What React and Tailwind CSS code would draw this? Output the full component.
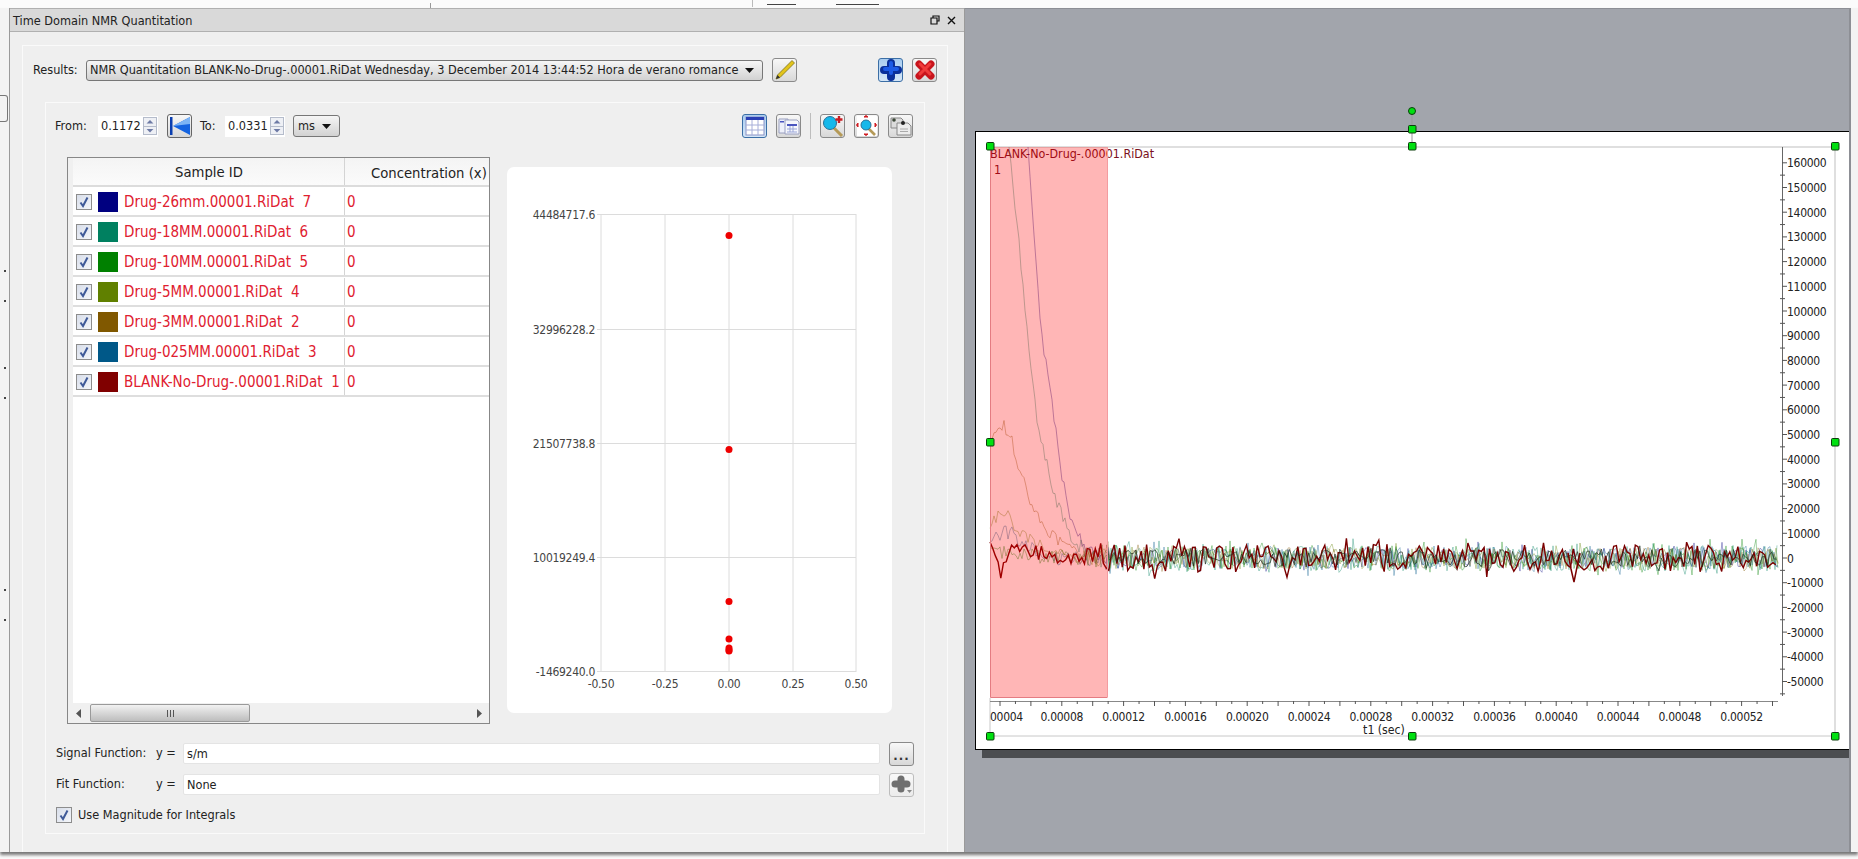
const samples = [
  { name: "Drug-26mm.00001.RiDat  7", color: "bg-[#000080]" },
  { name: "Drug-18MM.00001.RiDat  6", color: "bg-[#008060]" },
  { name: "Drug-10MM.00001.RiDat  5", color: "bg-[#008000]" },
  { name: "Drug-5MM.00001.RiDat  4", color: "bg-[#608000]" },
  { name: "Drug-3MM.00001.RiDat  2", color: "bg-[#805800]" },
  { name: "Drug-025MM.00001.RiDat  3", color: "bg-[#005888]" },
  { name: "BLANK-No-Drug-.00001.RiDat  1", color: "bg-[#800000]" },
];

function Check({ className = "" }) {
  return (
    <span className={`w-[16px] h-[16px] shrink-0 border border-[#8d8d8d] bg-gradient-to-br from-[#d8deea] to-[#f4f6fa] flex items-center justify-center ${className}`}>
      <svg width="12" height="12" viewBox="0 0 12 12">
        <path d="M2.5 6.5 L5 10 L9.5 1.5" fill="none" stroke="#3f5a98" strokeWidth="2" />
      </svg>
    </span>
  );
}

function IconButton({ active, children, className = "" }) {
  return (
    <button
      className={`w-[25px] h-[24px] shrink-0 rounded-[3px] border flex items-center justify-center ${
        active
          ? "border-[#3b6ea5] bg-gradient-to-b from-[#a9cdf0] to-[#d5e6f7]"
          : "border-[#8a8a8a] bg-gradient-to-b from-[#f8f8f8] to-[#d8d8d8]"
      } ${className}`}
    >
      {children}
    </button>
  );
}

function Spin({ value }) {
  return (
    <div className="w-[60px] h-[21px] bg-white flex items-center pl-[3px] pr-[1px] text-[12.6px] text-[#222]">
      <span className="flex-1">{value}</span>
      <div className="flex flex-col w-[14px] h-[18px] border border-[#b5bccb] bg-[#eef0f5]">
        <svg className="flex-1" viewBox="0 0 14 8"><path d="M3 6 L7 2 L11 6Z" fill="#6d7aa5" /></svg>
        <svg className="flex-1 border-t border-[#b5bccb]" viewBox="0 0 14 8"><path d="M3 2 L7 6 L11 2Z" fill="#6d7aa5" /></svg>
      </div>
    </div>
  );
}

function Arrow() {
  return (
    <svg width="9" height="5" viewBox="0 0 9 5" className="shrink-0">
      <path d="M0 0 H9 L4.5 5Z" fill="#111" />
    </svg>
  );
}

function FunctionRow({ label, value, className = "", children }) {
  return (
    <div className={`flex items-center h-[21px] ml-[10px] text-[12.6px] text-[#222] ${className}`}>
      <span className="w-[100px]">{label}</span>
      <span className="w-[27px]">y =</span>
      <div className="w-[697px] h-[21px] bg-white border border-[#e4e4e4] rounded-[2px] pl-[3px] leading-[19px]">{value}</div>
      <div className="ml-[9px]">{children}</div>
    </div>
  );
}

function ScatterChart() {
  const hLines = [
    [214.5, "44484717.6"],
    [329.5, "32996228.2"],
    [443.5, "21507738.8"],
    [557.5, "10019249.4"],
    [671.5, "-1469240.0"],
  ];
  const vLines = [
    [601, "-0.50"],
    [665, "-0.25"],
    [729, "0.00"],
    [793, "0.25"],
    [856, "0.50"],
  ];
  const points = [235.5, 449.5, 601.5, 639, 648, 650, 651];
  return (
    <svg width="385" height="546" viewBox="507 167 385 546" className="block">
      {hLines.map(([y, label]) => (
        <g key={label}>
          <line x1="597" x2="856" y1={y} y2={y} stroke="#dcdcdc" />
          <text x="595" y={y + 4} textAnchor="end" fontSize="12" letterSpacing="-0.3" fill="#444">{label}</text>
        </g>
      ))}
      {vLines.map(([x, label]) => (
        <g key={label}>
          <line x1={x} x2={x} y1="214" y2="672" stroke="#dcdcdc" />
          <text x={x} y="688" textAnchor="middle" fontSize="12" letterSpacing="-0.3" fill="#444">{label}</text>
        </g>
      ))}
      {points.map((y) => (
        <circle key={y} cx="729" cy={y} r="3.5" fill="#ee0000" />
      ))}
    </svg>
  );
}

function mulberry(seed) {
  return () => {
    seed |= 0;
    seed = (seed + 0x6d2b79f5) | 0;
    let t = Math.imul(seed ^ (seed >>> 15), 1 | seed);
    t = (t + Math.imul(t ^ (t >>> 7), 61 | t)) ^ t;
    return ((t ^ (t >>> 14)) >>> 0) / 4294967296;
  };
}

function baseline(points, x) {
  if (x <= points[0][0]) return points[0][1];
  for (let i = 1; i < points.length; i++) {
    if (x <= points[i][0]) {
      const [x0, y0] = points[i - 1];
      const [x1, y1] = points[i];
      return y0 + ((y1 - y0) * (x - x0)) / (x1 - x0);
    }
  }
  return 557;
}

function trace(seed, points, startX, amp, step = 2) {
  const rnd = mulberry(seed * 131);
  const out = [];
  for (let x = startX; x <= 1778; x += step) {
    const base = baseline(points, x);
    const env = x < 1085 ? 0.55 : x < 1105 ? 0.75 : 1;
    let n = (rnd() - 0.5) * 2 * amp * env;
    if (rnd() > 0.92) n *= 1.5;
    out.push(`${x.toFixed(1)},${Math.max(146, base + n).toFixed(1)}`);
  }
  return out.join(" ");
}

const traces = [
  { color: "#000080", seed: 7, pts: [[1028, 146], [1037, 277], [1041, 330], [1052, 400], [1062, 480], [1070, 513], [1077, 530], [1083, 542], [1100, 557]], start: 1028, amp: 11 },
  { color: "#008060", seed: 6, pts: [[1009, 146], [1021, 263], [1027, 330], [1038, 420], [1050, 480], [1060, 510], [1070, 535], [1085, 550], [1100, 557]], start: 1009, amp: 13 },
  { color: "#005888", seed: 3, pts: [[990, 542], [1005, 530], [1040, 552], [1060, 557]], start: 990, amp: 12 },
  { color: "#805800", seed: 2, pts: [[990, 438], [1003, 423], [1012, 440], [1018, 470], [1023, 480], [1045, 530], [1060, 540], [1075, 553], [1090, 557]], start: 990, amp: 11 },
  { color: "#608000", seed: 4, pts: [[990, 523], [1006, 508], [1014, 525], [1027, 537], [1050, 550], [1070, 557]], start: 990, amp: 11 },
  { color: "#008000", seed: 5, pts: [[990, 550], [1030, 552], [1070, 557]], start: 990, amp: 13 },
];
const blank = trace(
  1,
  [[990, 548], [996, 560], [1000, 575], [1001, 585], [1004, 565], [1008, 550], [1040, 552], [1070, 558]],
  990,
  14,
  2.7
);
const dark = trace(9, [[1107, 557]], 1107, 9, 2.4);

function Canvas() {
  const yTicks = [];
  for (let v = 160000; v >= -50000; v -= 10000) yTicks.push(v);
  const xLabels = ["00004", "0.00008", "0.00012", "0.00016", "0.00020", "0.00024", "0.00028", "0.00032", "0.00036", "0.00040", "0.00044", "0.00048", "0.00052"];
  const handles = [[990, 145], [1412, 145], [1835, 145], [990, 441], [1835, 441], [990, 735], [1412, 735], [1835, 735], [1412, 128]];
  const xTicks = [];
  for (let i = 0; i < 51; i++) xTicks.push(1000 + i * 15.45);
  const yOf = (v) => 557 - (v / 10000) * 24.7;
  return (
    <svg width="886" height="844" viewBox="965 8 886 844" className="absolute inset-0">
      <rect x="990" y="145" width="845" height="2" fill="#dfdfdf" />
      <rect x="1834" y="146" width="2" height="589" fill="#dfdfdf" />
      <line x1="990" x2="1835" y1="735" y2="735" stroke="#c8c8c8" />
      <line x1="990" x2="990" y1="697" y2="735" stroke="#c8c8c8" />
      <line x1="1412" x2="1412" y1="110" y2="146" stroke="#999" />

      <text x="990" y="157" fontSize="12.4" fill="#7a1020">BLANK-No-Drug-.00001.RiDat</text>
      <text x="994" y="173" fontSize="12.4" fill="#7a1020">1</text>

      {traces.map((t) => (
        <polyline key={t.seed} points={trace(t.seed, t.pts, t.start, t.amp)} fill="none" stroke={t.color} strokeWidth="0.8" opacity="0.45" />
      ))}
      <polyline points={blank} fill="none" stroke="#7a0000" strokeWidth="1.4" />
      <polyline points={dark} fill="none" stroke="#1a2a1a" strokeWidth="0.9" opacity="0.75" />
      <polyline points="1568,552 1571,568 1574,581 1577,566 1580,552" fill="none" stroke="#7a0000" strokeWidth="1.5" />

      <rect x="990.5" y="146" width="117" height="550" fill="#ff0000" fillOpacity="0.285" />
      <path d="M990.5 146 V696.5 H1107.5" fill="none" stroke="#e47c82" />
      <line x1="1107.5" x2="1107.5" y1="146" y2="696" stroke="#f39ca0" />

      <line x1="990" x2="1778" y1="700.5" y2="700.5" stroke="#888" />
      {xTicks.map((x, i) => (
        <line key={x} x1={x} x2={x} y1="700" y2={i % 2 ? 703 : 705} stroke="#555" />
      ))}
      {xLabels.map((label, i) =>
        i === 0 ? (
          <text key={label} x="990" y="720" fontSize="12" letterSpacing="-0.3" fill="#222">{label}</text>
        ) : (
          <text key={label} x={1000 + i * 61.8} y="720" textAnchor="middle" fontSize="12" letterSpacing="-0.3" fill="#222">{label}</text>
        )
      )}
      <text x="1384" y="733" textAnchor="middle" fontSize="12.2" fill="#222">t1 (sec)</text>

      <line x1="1782.5" x2="1782.5" y1="146" y2="695" stroke="#666" />
      {yTicks.map((v) => (
        <g key={v}>
          <line x1="1782" x2="1787" y1={yOf(v)} y2={yOf(v)} stroke="#555" />
          <line x1="1780" x2="1785" y1={yOf(v) + 12.35} y2={yOf(v) + 12.35} stroke="#555" />
          <text x="1787" y={yOf(v) + 4.5} fontSize="12" letterSpacing="-0.3" fill="#222">{v}</text>
        </g>
      ))}

      {handles.map(([x, y]) => (
        <rect key={`${x}-${y}`} x={x - 3.5} y={y - 3.5} width="7.5" height="7.5" rx="1" fill="#00e010" stroke="#0b3d0b" />
      ))}
      <circle cx="1412" cy="110" r="3.5" fill="#00e010" stroke="#0b3d0b" />
    </svg>
  );
}

export default function App() {
  return (
    <div className="w-[1858px] h-[859px] overflow-hidden bg-[#fbfbfb] flex flex-col font-['DejaVu_Sans',sans-serif] font-stretch-condensed">
      {/* Top strip */}
      <div className="h-[8px] shrink-0 flex items-start">
        <span className="ml-[430px] mt-[3px] w-px h-[5px] bg-[#999]" />
        <span className="ml-[321px] w-px h-[7px] bg-[#bbb]" />
        <span className="ml-[14px] mt-[4px] w-[29px] h-px bg-[#444]" />
        <span className="ml-[40px] mt-[4px] w-[43px] h-px bg-[#444]" />
      </div>

      <div className="h-[844px] shrink-0 flex shadow-[0_3px_3px_#777]">
        {/* Left strip */}
        <div className="w-[9px] shrink-0 bg-[#f3f3f3] flex flex-col">
          <span className="mt-[87px] h-[27px] w-[8px] border-r border-y border-[#777] rounded-r-[3px]" />
          <span className="mt-[148px] ml-[4px] w-[2px] h-[2px] bg-[#444]" />
          <span className="mt-[28px] ml-[4px] w-[2px] h-[2px] bg-[#444]" />
          <span className="mt-[65px] ml-[4px] w-[2px] h-[2px] bg-[#444]" />
          <span className="mt-[28px] ml-[4px] w-[2px] h-[2px] bg-[#444]" />
          <span className="mt-[190px] ml-[4px] w-[2px] h-[2px] bg-[#444]" />
          <span className="mt-[28px] ml-[4px] w-[2px] h-[2px] bg-[#444]" />
        </div>

        {/* Quantitation panel */}
        <div className="w-[956px] shrink-0 bg-[#efefef] border-l border-r border-[#9a9a9a] flex flex-col">
          <div className="h-[24px] shrink-0 bg-[#d9d9d9] border-y border-[#b0b0b0] flex items-center pl-[3px] pr-[8px] text-[12.6px] text-[#222]">
            <span className="flex-1 mt-[2px]">Time Domain NMR Quantitation</span>
            <svg width="10" height="10" viewBox="0 0 10 10" className="mr-[7px]">
              <path d="M3 3V1H9V6H7M1 3H7V9H1Z" fill="none" stroke="#111" strokeWidth="1.2" />
            </svg>
            <svg width="9" height="9" viewBox="0 0 9 9">
              <path d="M1 1L8 8M8 1L1 8" stroke="#111" strokeWidth="1.4" />
            </svg>
          </div>

          <div className="ml-[12px] mr-[16px] mt-[13px] flex-1 border-l border-t border-r border-[#fafafa] flex flex-col">
            {/* Results row */}
            <div className="flex items-center h-[24px] mt-[12px] pl-[10px] text-[12.6px] text-[#222]">
              <span className="w-[53px]">Results:</span>
              <div className="w-[677px] h-[21px] rounded-[3px] border border-[#777] bg-gradient-to-b from-[#f6f6f6] to-[#d2d2d2] flex items-center pl-[3px] pr-[8px]">
                <span className="flex-1 whitespace-nowrap">NMR Quantitation BLANK-No-Drug-.00001.RiDat Wednesday, 3 December 2014 13:44:52 Hora de verano romance</span>
                <Arrow />
              </div>
              <IconButton className="ml-[9px]">
                <svg width="22" height="22" viewBox="0 0 22 22">
                  <path d="M2 20 L3.5 16 L18 1.5 L20.5 4 L6 18.5Z" fill="#e2c41c" stroke="#6f6410" strokeWidth="0.7" />
                  <path d="M2 20 L3.5 16 L6 18.5Z" fill="#333" />
                </svg>
              </IconButton>
              <IconButton active className="ml-[81px]">
                <svg width="22" height="22" viewBox="0 0 22 22">
                  <path d="M11 4V18M4 11H18" stroke="#0a2f9a" strokeWidth="8" strokeLinecap="round" />
                  <path d="M11 4V14M5 10H17" stroke="#1c5ae6" strokeWidth="4" strokeLinecap="round" />
                </svg>
              </IconButton>
              <IconButton className="ml-[9px]">
                <svg width="22" height="22" viewBox="0 0 22 22">
                  <path d="M5 5L17 17M17 5L5 17" stroke="#c8141c" strokeWidth="7" strokeLinecap="round" />
                  <path d="M6 5L16 15M16 5L6 15" stroke="#f03a3a" strokeWidth="3" strokeLinecap="round" />
                </svg>
              </IconButton>
            </div>

            {/* Inner group */}
            <div className="ml-[22px] mr-[22px] mt-[20px] h-[732px] border border-[#fafafa] flex flex-col">
              <div className="flex items-center h-[24px] mt-[11px] pl-[9px] pr-[11px] text-[12.6px] text-[#222]">
                <span className="w-[43px]">From:</span>
                <Spin value="0.1172" />
                <IconButton className="ml-[9px] border-[#666]">
                  <svg width="22" height="22" viewBox="0 0 22 22">
                    <rect x="1" y="2" width="2.5" height="18" fill="#0b3fb0" />
                    <path d="M4 11 L21 2 V20Z" fill="#1463e0" />
                    <path d="M4 11 L21 2 V9Z" fill="#7cb4f5" />
                  </svg>
                </IconButton>
                <span className="ml-[8px] w-[25px]">To:</span>
                <Spin value="0.0331" />
                <div className="ml-[8px] w-[47px] h-[22px] rounded-[3px] border border-[#777] bg-gradient-to-b from-[#f6f6f6] to-[#d2d2d2] flex items-center pl-[4px] pr-[8px]">
                  <span className="flex-1">ms</span>
                  <Arrow />
                </div>
                <div className="flex-1" />
                <IconButton active>
                  <svg width="20" height="20" viewBox="0 0 20 20">
                    <rect x="1" y="1" width="18" height="18" fill="#fff" stroke="#8a92c4" />
                    <rect x="1" y="1" width="18" height="3" fill="#2a3fb5" />
                    <path d="M7 4V19M13 4V19M1 9H19M1 14H19" stroke="#a6aed8" />
                  </svg>
                </IconButton>
                <IconButton className="ml-[9px]">
                  <svg width="22" height="20" viewBox="0 0 22 20">
                    <path d="M1 3H10V17H1Z" fill="#eef0fa" stroke="#9aa0c0" />
                    <path d="M7 4H19L21 6V18H7Z" fill="#f5f6fc" stroke="#9aa0c0" />
                    <rect x="9" y="8" width="10" height="2" fill="#4a55c0" />
                    <path d="M12 10V16M15 10V16M9 13H19M9 16H19" stroke="#9aa6d8" />
                    <rect x="2" y="5" width="4" height="1.5" fill="#4a55c0" />
                  </svg>
                </IconButton>
                <span className="ml-[9px] w-px h-[26px] bg-[#bdbdbd]" />
                <IconButton className="ml-[9px]">
                  <svg width="22" height="22" viewBox="0 0 22 22">
                    <path d="M11 12L20 21" stroke="#b59a58" strokeWidth="3" />
                    <circle cx="8" cy="8" r="6.5" fill="#16b8ea" stroke="#2a6f95" />
                    <path d="M17 1V8M13.5 4.5H20.5" stroke="#c81e24" strokeWidth="2.4" />
                  </svg>
                </IconButton>
                <IconButton className="ml-[9px]">
                  <svg width="22" height="22" viewBox="0 0 22 22">
                    <rect x="1" y="1" width="20" height="20" fill="#fff" />
                    <path d="M12 13L19 20" stroke="#b59a58" strokeWidth="2.6" />
                    <circle cx="10" cy="10" r="5" fill="#16b8ea" stroke="#2a6f95" />
                    <path d="M8 2L10 0.5L12 2ZM8 19L10 20.5L12 19ZM2 8L0.5 10L2 12ZM19 8L20.5 10L19 12Z" fill="#d01c22" stroke="#d01c22" />
                  </svg>
                </IconButton>
                <IconButton className="ml-[9px]">
                  <svg width="22" height="22" viewBox="0 0 22 22">
                    <path d="M1 3H11L13 5V13H1Z" fill="#dcdcdc" stroke="#888" />
                    <path d="M7 8H18L21 11V20H7Z" fill="#ececec" stroke="#888" />
                    <circle cx="4" cy="5" r="1.8" fill="#3f4a3a" />
                    <circle cx="13" cy="8" r="2" fill="#222" />
                    <path d="M10 14H18M10 16.5H18" stroke="#aaa" />
                  </svg>
                </IconButton>
              </div>

              <div className="flex items-start h-[567px] mt-[19px] ml-[21px]">
                {/* Sample table */}
                <div className="w-[423px] h-[567px] shrink-0 border border-[#878787] bg-white flex flex-col">
                  <div className="flex-1 flex min-h-0">
                    <div className="w-[5px] shrink-0 bg-[#f0f0f0]" />
                    <div className="flex-1 min-w-0 overflow-hidden">
                      <div className="flex h-[29px] items-center border-b-2 border-[#dcdcdc] bg-gradient-to-b from-[#f4f4f4] to-[#fbfbfb] text-[14.7px] text-[#222]">
                        <span className="w-[272px] h-full shrink-0 pl-[1px] pt-[3px] text-center border-r border-[#d4d4d4]">Sample ID</span>
                        <span className="flex-1 pl-[26px] pt-[3px] whitespace-nowrap">Concentration (x)</span>
                      </div>
                      {samples.map((s) => (
                        <div key={s.name} className="flex items-center h-[30px] pt-[1px] border-b-2 border-[#dedede] text-[15px] text-[#e0202f]">
                          <div className="w-[272px] shrink-0 h-full flex items-center pl-[3px] border-r border-[#d4d4d4] whitespace-pre">
                            <Check />
                            <span className={`ml-[6px] w-[20px] h-[20px] shrink-0 ${s.color}`} />
                            <span className="ml-[6px] mt-[2px]">{s.name}</span>
                          </div>
                          <span className="pl-[2px] mt-[2px]">0</span>
                        </div>
                      ))}
                    </div>
                  </div>
                  <div className="h-[20px] shrink-0 bg-[#f0f0f0] flex items-center">
                    <svg width="6" height="9" viewBox="0 0 6 9" className="ml-[8px]"><path d="M5 0V9L0 4.5Z" fill="#555" /></svg>
                    <div className="ml-[8px] w-[160px] h-[18px] rounded-[2px] border border-[#9a9a9a] bg-gradient-to-b from-[#f2f2f2] to-[#bdbdbd] flex items-center justify-center gap-[2px]">
                      <span className="w-px h-[7px] bg-[#555]" />
                      <span className="w-px h-[7px] bg-[#555]" />
                      <span className="w-px h-[7px] bg-[#555]" />
                    </div>
                    <svg width="6" height="9" viewBox="0 0 6 9" className="ml-[227px]"><path d="M0 0V9L5 4.5Z" fill="#555" /></svg>
                  </div>
                </div>

                {/* Scatter card */}
                <div className="ml-[17px] mt-[10px] w-[385px] h-[546px] bg-white rounded-[7px] overflow-hidden">
                  <ScatterChart />
                </div>
              </div>

              <FunctionRow label="Signal Function:" value="s/m" className="mt-[19px]">
                <IconButton className="h-[20px]">
                  <span className="text-[13px] font-bold leading-[10px] text-[#333] tracking-[1px] mt-[4px]">...</span>
                </IconButton>
              </FunctionRow>
              <FunctionRow label="Fit Function:" value="None" className="mt-[10px]">
                <IconButton className="h-[23px] border-[#bdbdbd] from-[#f4f4f4] to-[#ececec]">
                  <svg width="22" height="21" viewBox="0 0 22 21">
                    <path d="M10 5V15M4 10H16" stroke="#6f6f6f" strokeWidth="7" strokeLinecap="round" />
                    <path d="M16 16H21L18.5 19Z" fill="#888" />
                  </svg>
                </IconButton>
              </FunctionRow>
              <div className="flex items-center ml-[10px] mt-[11px] text-[12.6px] text-[#222]">
                <Check />
                <span className="ml-[6px]">Use Magnitude for Integrals</span>
              </div>
            </div>
          </div>
        </div>

        {/* Layout canvas */}
        <div className="relative w-[886px] shrink-0 overflow-hidden bg-[#a2a5ac] border-t border-[#8d8f95] border-r-2 border-r-[#8d8f95]">
          <div className="ml-[10px] mt-[122px] w-[875px] h-[619px] bg-white border border-black shadow-[7px_8px_0_#4b4d50]" />
          <Canvas />
        </div>
        <div className="flex-1 bg-[#f3f3f3]" />
      </div>
    </div>
  );
}
